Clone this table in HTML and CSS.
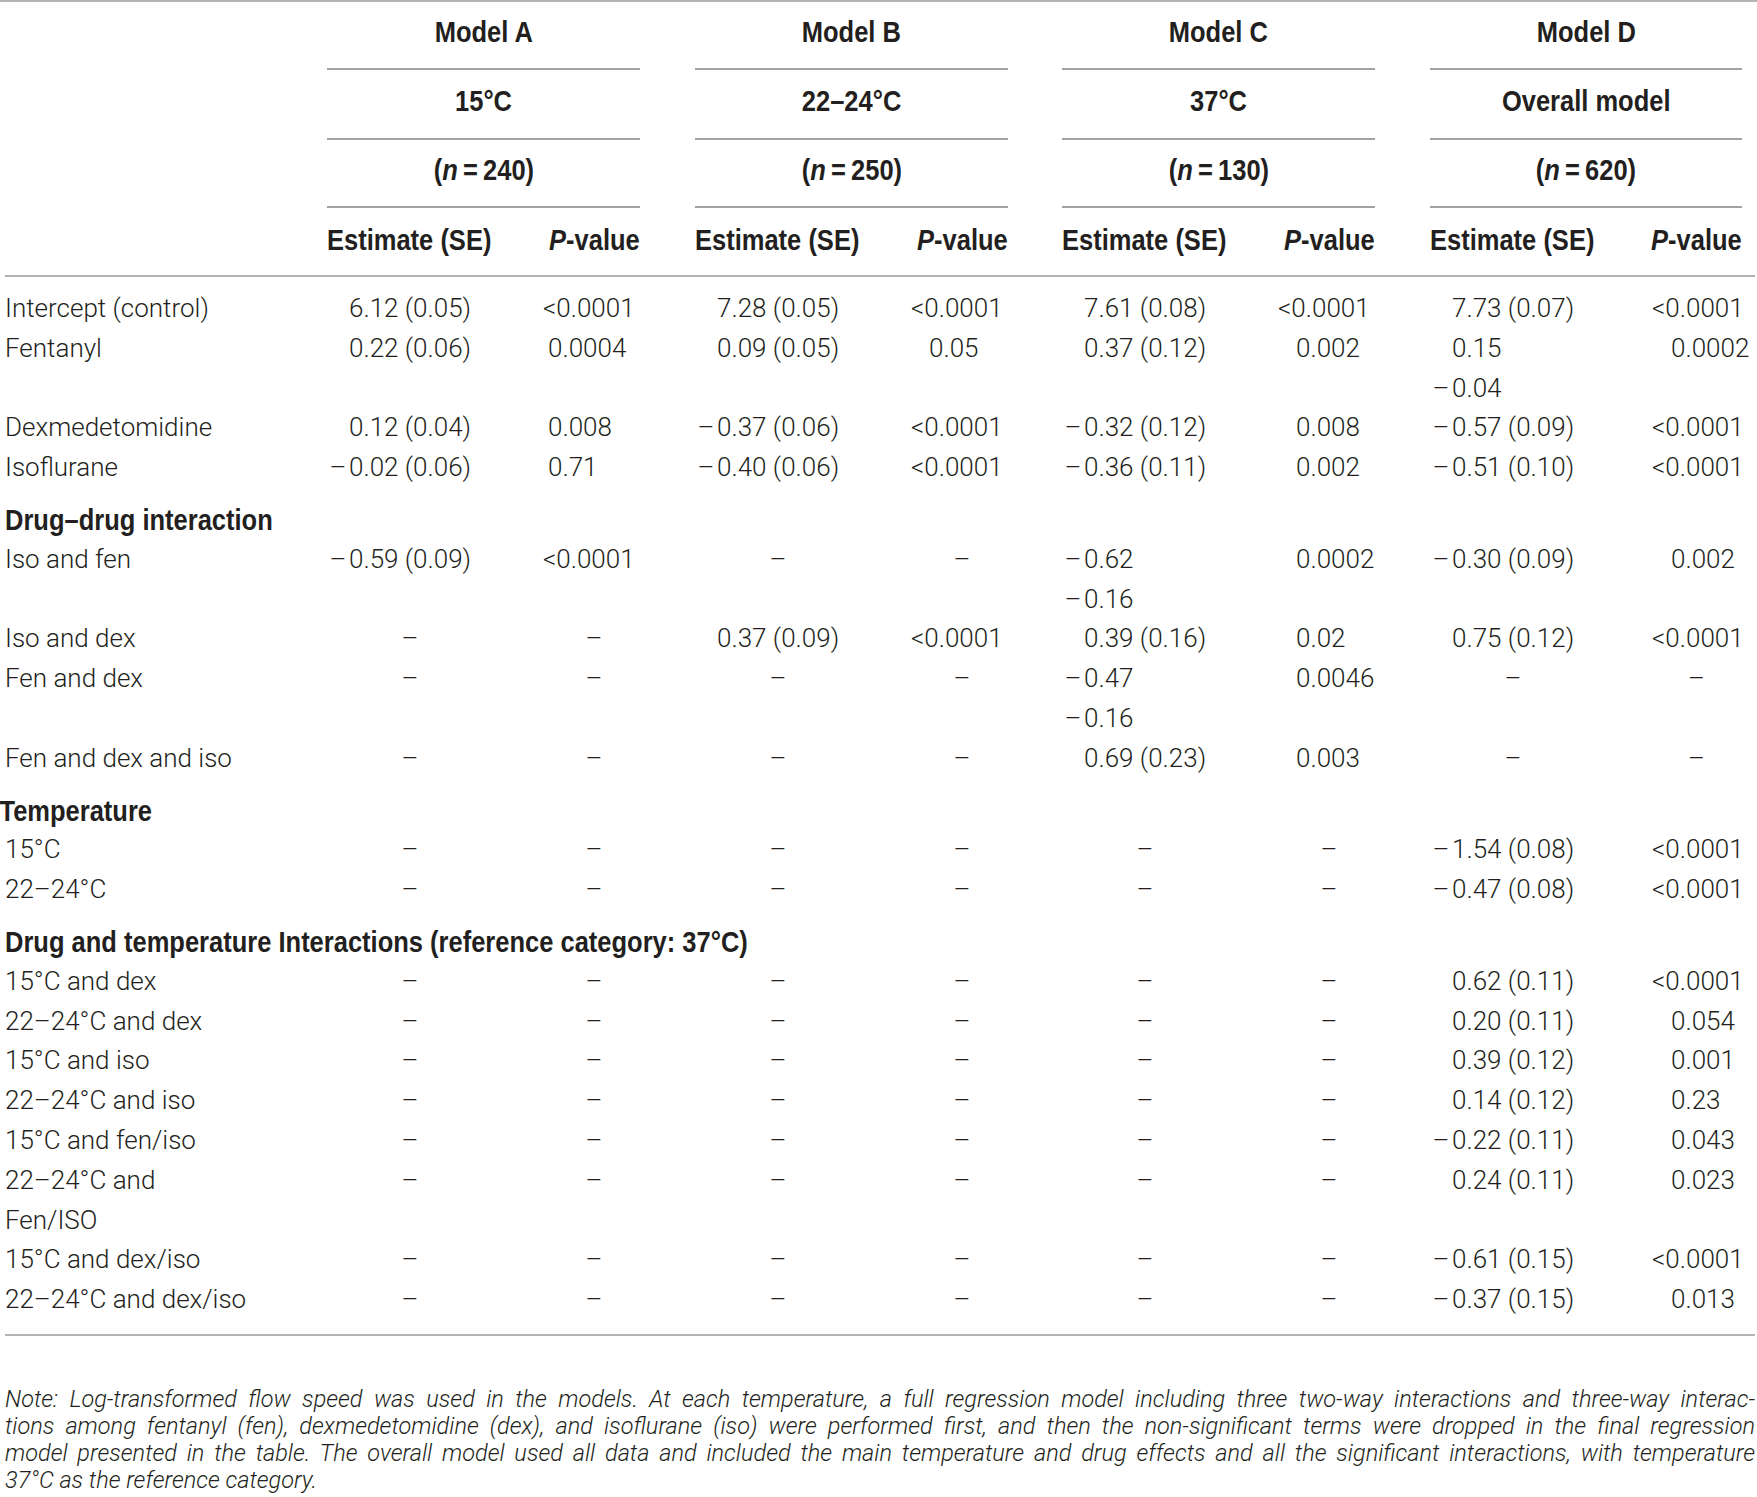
FILE: index.html
```html
<!DOCTYPE html>
<html lang="en">
<head>
  <meta charset="UTF-8" />
  <meta name="viewport" content="width=device-width, initial-scale=1.0"/>
  <title>Regression estimates of flow speed by temperature</title>
  <link rel="stylesheet" href="styles.css">
</head>
<body>
  <div class="sheet">
    <table class="stats">
      <colgroup>
        <col class="c-label">
        <col class="c-est"><col class="c-p"><col class="c-gap">
        <col class="c-est"><col class="c-p"><col class="c-gap2">
        <col class="c-est"><col class="c-p"><col class="c-gap">
        <col class="c-est"><col class="c-p-last"><col class="c-end">
      </colgroup>
      <thead>
        <tr class="h1">
          <th></th>
          <th colspan="2" class="grp"><span class="hx">Model A</span></th><th></th>
          <th colspan="2" class="grp"><span class="hx">Model B</span></th><th></th>
          <th colspan="2" class="grp"><span class="hx">Model C</span></th><th></th>
          <th colspan="2" class="grp"><span class="hx">Model D</span></th><th></th>
        </tr>
        <tr class="h2">
          <th></th>
          <th colspan="2" class="grp"><span class="hx">15°C</span></th><th></th>
          <th colspan="2" class="grp"><span class="hx">22–24°C</span></th><th></th>
          <th colspan="2" class="grp"><span class="hx">37°C</span></th><th></th>
          <th colspan="2" class="grp"><span class="hx">Overall model</span></th><th></th>
        </tr>
        <tr class="h3">
          <th></th>
          <th colspan="2" class="grp"><span class="hx">(<i>n</i>&thinsp;=&thinsp;240)</span></th><th></th>
          <th colspan="2" class="grp"><span class="hx">(<i>n</i>&thinsp;=&thinsp;250)</span></th><th></th>
          <th colspan="2" class="grp"><span class="hx">(<i>n</i>&thinsp;=&thinsp;130)</span></th><th></th>
          <th colspan="2" class="grp"><span class="hx">(<i>n</i>&thinsp;=&thinsp;620)</span></th><th></th>
        </tr>
        <tr class="h4">
          <th></th>
          <th class="est-h"><span class="hx">Estimate (SE)</span></th><th class="p-h"><span class="hx"><i>P</i>-value</span></th><th></th>
          <th class="est-h"><span class="hx">Estimate (SE)</span></th><th class="p-h"><span class="hx"><i>P</i>-value</span></th><th></th>
          <th class="est-h"><span class="hx">Estimate (SE)</span></th><th class="p-h"><span class="hx"><i>P</i>-value</span></th><th></th>
          <th class="est-h"><span class="hx">Estimate (SE)</span></th><th class="p-h"><span class="hx"><i>P</i>-value</span></th><th></th>
        </tr>
      </thead>
      <tbody>
        <tr class="first">
          <td>Intercept (control)</td>
          <td class="e">6.12 (0.05)</td><td class="lt">&lt;0.0001</td><td></td>
          <td class="e">7.28 (0.05)</td><td class="lt">&lt;0.0001</td><td></td>
          <td class="e">7.61 (0.08)</td><td class="lt">&lt;0.0001</td><td></td>
          <td class="e">7.73 (0.07)</td><td class="lt">&lt;0.0001</td><td></td>
        </tr>
        <tr>
          <td>Fentanyl</td>
          <td class="e">0.22 (0.06)</td><td class="p">0.0004</td><td></td>
          <td class="e">0.09 (0.05)</td><td class="p">0.05</td><td></td>
          <td class="e">0.37 (0.12)</td><td class="p">0.002</td><td></td>
          <td class="e">0.15<br><span class="m">–</span>0.04</td><td class="p">0.0002</td><td></td>
        </tr>
        <tr>
          <td>Dexmedetomidine</td>
          <td class="e">0.12 (0.04)</td><td class="p">0.008</td><td></td>
          <td class="e"><span class="m">–</span>0.37 (0.06)</td><td class="lt">&lt;0.0001</td><td></td>
          <td class="e"><span class="m">–</span>0.32 (0.12)</td><td class="p">0.008</td><td></td>
          <td class="e"><span class="m">–</span>0.57 (0.09)</td><td class="lt">&lt;0.0001</td><td></td>
        </tr>
        <tr>
          <td>Isoflurane</td>
          <td class="e"><span class="m">–</span>0.02 (0.06)</td><td class="p">0.71</td><td></td>
          <td class="e"><span class="m">–</span>0.40 (0.06)</td><td class="lt">&lt;0.0001</td><td></td>
          <td class="e"><span class="m">–</span>0.36 (0.11)</td><td class="p">0.002</td><td></td>
          <td class="e"><span class="m">–</span>0.51 (0.10)</td><td class="lt">&lt;0.0001</td><td></td>
        </tr>
        <tr class="section">
          <td colspan="13"><span class="hx">Drug–drug interaction</span></td>
        </tr>
        <tr>
          <td>Iso and fen</td>
          <td class="e"><span class="m">–</span>0.59 (0.09)</td><td class="lt">&lt;0.0001</td><td></td>
          <td class="na">–</td><td class="na">–</td><td></td>
          <td class="e"><span class="m">–</span>0.62<br><span class="m">–</span>0.16</td><td class="p">0.0002</td><td></td>
          <td class="e"><span class="m">–</span>0.30 (0.09)</td><td class="p">0.002</td><td></td>
        </tr>
        <tr>
          <td>Iso and dex</td>
          <td class="na">–</td><td class="na">–</td><td></td>
          <td class="e">0.37 (0.09)</td><td class="lt">&lt;0.0001</td><td></td>
          <td class="e">0.39 (0.16)</td><td class="p">0.02</td><td></td>
          <td class="e">0.75 (0.12)</td><td class="lt">&lt;0.0001</td><td></td>
        </tr>
        <tr>
          <td>Fen and dex</td>
          <td class="na">–</td><td class="na">–</td><td></td>
          <td class="na">–</td><td class="na">–</td><td></td>
          <td class="e"><span class="m">–</span>0.47<br><span class="m">–</span>0.16</td><td class="p">0.0046</td><td></td>
          <td class="na">–</td><td class="na">–</td><td></td>
        </tr>
        <tr>
          <td>Fen and dex and iso</td>
          <td class="na">–</td><td class="na">–</td><td></td>
          <td class="na">–</td><td class="na">–</td><td></td>
          <td class="e">0.69 (0.23)</td><td class="p">0.003</td><td></td>
          <td class="na">–</td><td class="na">–</td><td></td>
        </tr>
        <tr class="section">
          <td colspan="13" class="outdent"><span class="hx">Temperature</span></td>
        </tr>
        <tr>
          <td>15°C</td>
          <td class="na">–</td><td class="na">–</td><td></td>
          <td class="na">–</td><td class="na">–</td><td></td>
          <td class="na">–</td><td class="na">–</td><td></td>
          <td class="e"><span class="m">–</span>1.54 (0.08)</td><td class="lt">&lt;0.0001</td><td></td>
        </tr>
        <tr>
          <td>22–24°C</td>
          <td class="na">–</td><td class="na">–</td><td></td>
          <td class="na">–</td><td class="na">–</td><td></td>
          <td class="na">–</td><td class="na">–</td><td></td>
          <td class="e"><span class="m">–</span>0.47 (0.08)</td><td class="lt">&lt;0.0001</td><td></td>
        </tr>
        <tr class="section">
          <td colspan="13"><span class="hx">Drug and temperature Interactions (reference category: 37°C)</span></td>
        </tr>
        <tr>
          <td>15°C and dex</td>
          <td class="na">–</td><td class="na">–</td><td></td>
          <td class="na">–</td><td class="na">–</td><td></td>
          <td class="na">–</td><td class="na">–</td><td></td>
          <td class="e">0.62 (0.11)</td><td class="lt">&lt;0.0001</td><td></td>
        </tr>
        <tr>
          <td>22–24°C and dex</td>
          <td class="na">–</td><td class="na">–</td><td></td>
          <td class="na">–</td><td class="na">–</td><td></td>
          <td class="na">–</td><td class="na">–</td><td></td>
          <td class="e">0.20 (0.11)</td><td class="p">0.054</td><td></td>
        </tr>
        <tr>
          <td>15°C and iso</td>
          <td class="na">–</td><td class="na">–</td><td></td>
          <td class="na">–</td><td class="na">–</td><td></td>
          <td class="na">–</td><td class="na">–</td><td></td>
          <td class="e">0.39 (0.12)</td><td class="p">0.001</td><td></td>
        </tr>
        <tr>
          <td>22–24°C and iso</td>
          <td class="na">–</td><td class="na">–</td><td></td>
          <td class="na">–</td><td class="na">–</td><td></td>
          <td class="na">–</td><td class="na">–</td><td></td>
          <td class="e">0.14 (0.12)</td><td class="p">0.23</td><td></td>
        </tr>
        <tr>
          <td>15°C and fen/iso</td>
          <td class="na">–</td><td class="na">–</td><td></td>
          <td class="na">–</td><td class="na">–</td><td></td>
          <td class="na">–</td><td class="na">–</td><td></td>
          <td class="e"><span class="m">–</span>0.22 (0.11)</td><td class="p">0.043</td><td></td>
        </tr>
        <tr>
          <td>22–24°C and<br>Fen/ISO</td>
          <td class="na">–</td><td class="na">–</td><td></td>
          <td class="na">–</td><td class="na">–</td><td></td>
          <td class="na">–</td><td class="na">–</td><td></td>
          <td class="e">0.24 (0.11)</td><td class="p">0.023</td><td></td>
        </tr>
        <tr>
          <td>15°C and dex/iso</td>
          <td class="na">–</td><td class="na">–</td><td></td>
          <td class="na">–</td><td class="na">–</td><td></td>
          <td class="na">–</td><td class="na">–</td><td></td>
          <td class="e"><span class="m">–</span>0.61 (0.15)</td><td class="lt">&lt;0.0001</td><td></td>
        </tr>
        <tr class="last">
          <td>22–24°C and dex/iso</td>
          <td class="na">–</td><td class="na">–</td><td></td>
          <td class="na">–</td><td class="na">–</td><td></td>
          <td class="na">–</td><td class="na">–</td><td></td>
          <td class="e"><span class="m">–</span>0.37 (0.15)</td><td class="p">0.013</td><td></td>
        </tr>
      </tbody>
    </table>

    <p class="note">
      <span class="jl">Note: Log-transformed flow speed was used in the models. At each temperature, a full regression model including three two-way interactions and three-way interac-</span>
      <span class="jl">tions among fentanyl (fen), dexmedetomidine (dex), and isoflurane (iso) were performed first, and then the non-significant terms were dropped in the final regression</span>
      <span class="jl">model presented in the table. The overall model used all data and included the main temperature and drug effects and all the significant interactions, with temperature</span>
      <span>37°C as the reference category.</span>
    </p>
  </div>
</body>
</html>
```

FILE: styles.css
```css
html, body {
  margin: 0;
  padding: 0;
  background: #fff;
}
body {
  font-family: Roboto, "Liberation Sans", sans-serif;
  font-weight: 300;
  color: #231f20;
}
.sheet {
  width: 1757px;
  border-top: 2px solid #b3b3b3;
}
.stats {
  margin-left: 5px;
  width: 1750px;
  table-layout: fixed;
  border-collapse: separate;
  border-spacing: 0;
  font-size: 26px;
}
.c-label { width: 322px; }
.c-est { width: 166px; }
.c-p { width: 147px; }
.c-p-last { width: 146px; }
.c-gap { width: 55px; }
.c-gap2 { width: 54px; }
.c-end { width: 13px; }

th {
  font-family: "Liberation Sans", Arial, sans-serif;
  font-weight: 700;
  font-size: 30px;
  line-height: 40px;
  padding: 0;
  white-space: nowrap;
}
.hx {
  display: inline-block;
  transform: scaleX(0.85);
  transform-origin: center;
}
.grp {
  text-align: center;
  border-bottom: 2px solid #a3a3a3;
}
.h1 th { padding-top: 10px; padding-bottom: 16px; }
.h2 th { padding-top: 11px; padding-bottom: 17px; }
.h3 th { padding-top: 10px; padding-bottom: 16px; }
.h4 th {
  padding-top: 12px;
  padding-bottom: 15px;
  border-bottom: 2px solid #b3b3b3;
}
.est-h { text-align: left; }
.est-h .hx { transform-origin: left center; }
.p-h { text-align: right; }
.p-h .hx { transform-origin: right center; }

td {
  padding: 0;
  line-height: 39.8px;
  vertical-align: top;
  white-space: nowrap;
}
.first td { padding-top: 12px; }
.last td {
  padding-bottom: 14px;
  border-bottom: 2px solid #b3b3b3;
}
.section td {
  padding-top: 12px;
  font-family: "Liberation Sans", Arial, sans-serif;
  font-weight: 700;
  font-size: 30px;
}
.section .hx { transform-origin: left center; }
.section .outdent { text-indent: -3px; }

td.e { padding-left: 22px; }
.m {
  display: inline-block;
  width: 22px;
  margin-left: -22px;
  text-align: center;
}
td.na { text-align: center; }
td.na:nth-child(3n) { padding-left: 55px; }
td.p:nth-child(3) { padding-left: 55px; }
td.p:nth-child(6),
td.p:nth-child(9) { padding-left: 68px; }
td.p:nth-child(12) { padding-left: 75px; }
td.lt { padding-left: 50px; }
td.lt:nth-child(12) { padding-left: 56px; }

.note {
  margin: 50px 0 0 5px;
  width: 1750px;
  font-size: 23.5px;
  font-style: italic;
  line-height: 27px;
}
.note span {
  display: block;
  white-space: nowrap;
}
.note .jl {
  text-align: justify;
  text-align-last: justify;
  white-space: normal;
}
```
